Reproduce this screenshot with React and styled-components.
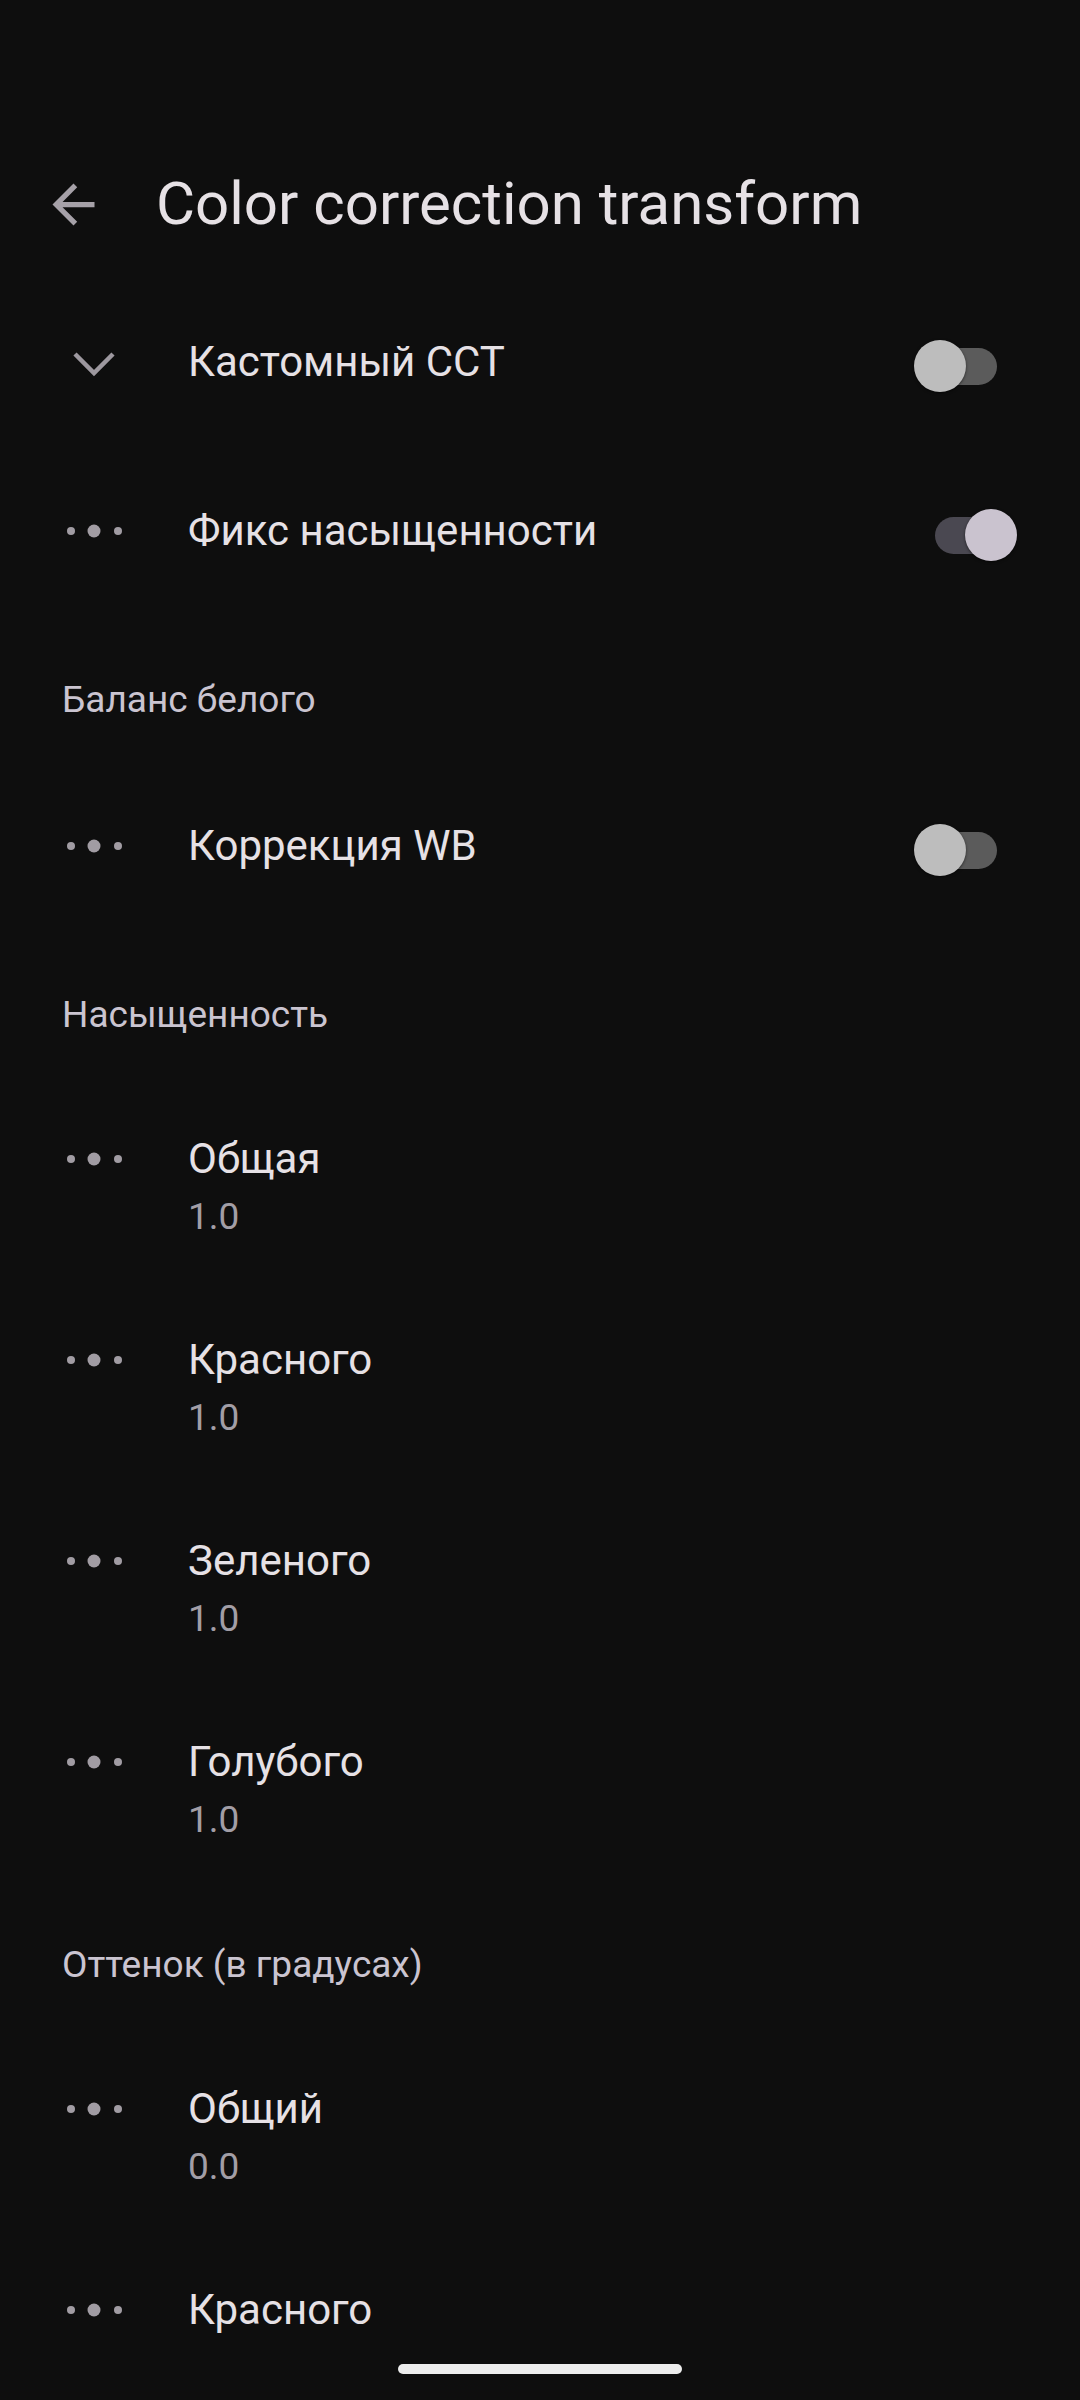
import React from "react";
import styled, { createGlobalStyle } from "styled-components";

const Global = createGlobalStyle`
  html, body { margin: 0; padding: 0; background: #0e0e0e; }
  * { box-sizing: border-box; }
`;

const Screen = styled.div`
  position: relative;
  width: 1080px;
  height: 2400px;
  overflow: hidden;
  background: #0e0e0e;
  font-family: Roboto, "Noto Sans", "Liberation Sans", sans-serif;
`;

const AppBar = styled.header`
  display: flex;
  align-items: center;
  padding: 164px 0 33px 42px;
`;

const BackButton = styled.div`
  width: 63px;
  height: 63px;
  display: flex;
  align-items: center;
  justify-content: center;
  color: #a6a1a8;
  flex-shrink: 0;
`;

const Title = styled.h1`
  margin: 0 0 0 51px;
  font-size: 60px;
  line-height: 80px;
  font-weight: 400;
  color: #e6e1e5;
  white-space: nowrap;
`;

const Row = styled.div`
  display: flex;
  align-items: ${(p) => (p.$two ? "flex-start" : "center")};
  height: ${(p) => (p.$two ? "201px" : "169px")};
  padding: ${(p) => (p.$two ? "55px 0 35px" : "0")};
`;

const IconSlot = styled.div`
  width: 104px;
  height: 56px;
  margin-left: 42px;
  display: flex;
  align-items: center;
  justify-content: center;
  flex-shrink: 0;
  color: #a19ca3;
`;

const TextCol = styled.div`
  flex: 1;
  padding-left: 42px;
  display: flex;
  flex-direction: column;
  gap: 5px;
`;

const ItemTitle = styled.div`
  font-size: 42px;
  line-height: 56px;
  color: #e6e1e5;
  white-space: nowrap;
`;

const Summary = styled.div`
  font-size: 37px;
  line-height: 50px;
  color: #a29ea6;
`;

const Header = styled.div`
  padding: 60px 0 36px 62px;
  font-size: 37px;
  line-height: 50px;
  color: #cac4d0;
`;

const Track = styled.div`
  position: relative;
  flex-shrink: 0;
  width: 62px;
  height: 37px;
  margin: 9px 83px 0 0;
  border-radius: 18.5px;
  background: ${(p) => (p.$on ? "#4a4851" : "#5b5b5b")};
`;

const Knob = styled.div`
  position: absolute;
  top: -7.5px;
  left: ${(p) => (p.$on ? "30px" : "-21px")};
  width: 52px;
  height: 52px;
  border-radius: 50%;
  background: ${(p) => (p.$on ? "#cac3cf" : "#bdbdbd")};
  box-shadow: 0 1px 3px rgba(0, 0, 0, 0.55);
`;

const NavBar = styled.div`
  position: absolute;
  left: 0;
  right: 0;
  bottom: 0;
  height: 63px;
  background: #0e0e0e;
  display: flex;
  align-items: center;
  justify-content: center;
`;

const HomeIndicator = styled.div`
  width: 284px;
  height: 10px;
  border-radius: 5px;
  background: #ededed;
`;

const ArrowBack = () => (
  <svg width="63" height="63" viewBox="0 0 24 24" fill="currentColor">
    <path d="M20 11H7.83l5.59-5.59L12 4l-8 8 8 8 1.41-1.41L7.83 13H20v-2z" />
  </svg>
);

const Chevron = () => (
  <svg width="44" height="26" viewBox="0 0 44 26" style={{ marginTop: 4 }}>
    <polyline
      points="3,3 22,22 41,3"
      fill="none"
      stroke="#9d989f"
      strokeWidth="4.5"
      strokeLinecap="butt"
      strokeLinejoin="miter"
    />
  </svg>
);

const Dots = () => (
  <svg width="60" height="14" viewBox="0 0 60 14" fill="currentColor">
    <circle cx="7" cy="7" r="4" />
    <circle cx="30" cy="7" r="6.5" />
    <circle cx="54" cy="7" r="4" />
  </svg>
);

const Toggle = ({ on }) => (
  <Track $on={on}>
    <Knob $on={on} />
  </Track>
);

const Item = ({ icon = "dots", title, summary, toggle }) => (
  <Row $two={!!summary}>
    <IconSlot>{icon === "chevron" ? <Chevron /> : <Dots />}</IconSlot>
    <TextCol>
      <ItemTitle>{title}</ItemTitle>
      {summary && <Summary>{summary}</Summary>}
    </TextCol>
    {toggle !== undefined && <Toggle on={toggle} />}
  </Row>
);

export default function App() {
  return (
    <Screen>
      <Global />
      <AppBar>
        <BackButton>
          <ArrowBack />
        </BackButton>
        <Title>Color correction transform</Title>
      </AppBar>

      <Item icon="chevron" title="Кастомный CCT" toggle={false} />
      <Item title="Фикс насыщенности" toggle={true} />

      <Header>Баланс белого</Header>
      <Item title="Коррекция WB" toggle={false} />

      <Header>Насыщенность</Header>
      <Item title="Общая" summary="1.0" />
      <Item title="Красного" summary="1.0" />
      <Item title="Зеленого" summary="1.0" />
      <Item title="Голубого" summary="1.0" />

      <Header>Оттенок (в градусах)</Header>
      <Item title="Общий" summary="0.0" />
      <Item title="Красного" summary="0.0" />

      <NavBar>
        <HomeIndicator />
      </NavBar>
    </Screen>
  );
}
